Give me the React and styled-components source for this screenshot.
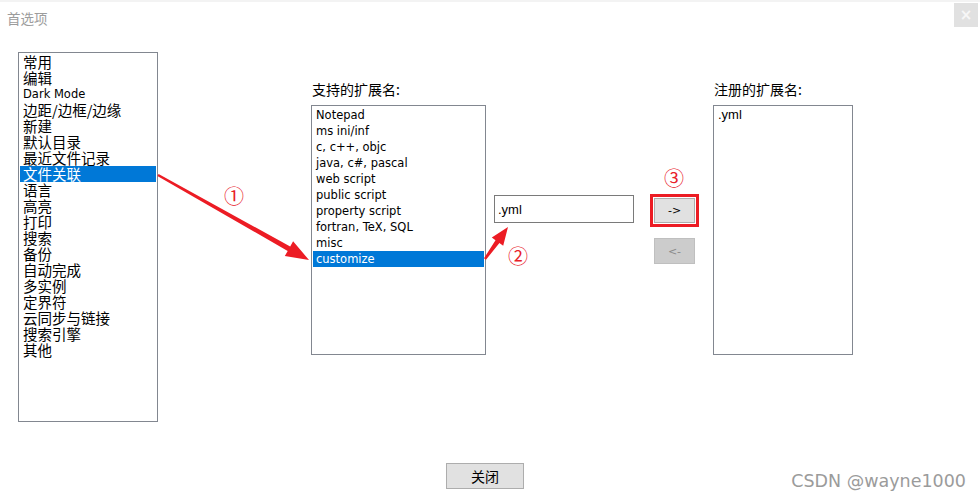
import React from "react"
import styled, { createGlobalStyle } from "styled-components"

const GlobalStyle = createGlobalStyle`
  html, body {
    margin: 0;
    padding: 0;
    background: #fff;
  }
  * {
    box-sizing: border-box;
  }
`

const cjk = `"Noto Sans CJK SC", "Noto Sans", sans-serif`
const latin = `"DejaVu Sans", "Noto Sans CJK SC", sans-serif`
const arial = `"Liberation Sans", Arial, sans-serif`

const Page = styled.div`
  position: relative;
  width: 980px;
  height: 502px;
  overflow: hidden;
  background: #fff;
  border-top: 2px solid #f3f3f3;
  font-family: ${cjk};
  color: #000;
`

const TitleBar = styled.div`
  height: 33px;
  display: flex;
  justify-content: space-between;
  align-items: center;
  padding: 0 2px 0 7px;
`

const Title = styled.div`
  font-size: 13.5px;
  color: #9c9c9c;
  margin-top: -1px;
`

const CloseX = styled.div`
  align-self: flex-start;
  margin-top: 1px;
  width: 24px;
  height: 24px;
  background: #e1e1e1;
  color: #f7f7f7;
  font-family: ${latin};
  font-size: 15px;
  font-weight: bold;
  display: flex;
  align-items: center;
  justify-content: center;
`

const Body = styled.div`
  display: flex;
  align-items: flex-start;
  margin-top: 17px;
  padding-left: 18px;
`

const Column = styled.div`
  display: flex;
  flex-direction: column;
  margin-left: ${p => p.$left}px;
  margin-top: ${p => p.$top || 0}px;
`

const Label = styled.div`
  font-size: 14px;
  line-height: 16px;
  height: 16px;
  padding-left: 1px;
  margin-bottom: 8px;
`

const ListBox = styled.div`
  width: ${p => p.$w}px;
  height: ${p => p.$h}px;
  border: 1px solid #828790;
  padding: 1px;
  background: #fff;
  overflow: hidden;
`

const fontFor = kind => (kind === "latin" ? latin : kind === "arial" ? arial : cjk)
const sizeFor = kind => (kind === "latin" ? "11.5px" : kind === "arial" ? "13px" : "14.5px")

const Item = styled.div`
  height: 16px;
  line-height: 16px;
  padding-left: 3px;
  white-space: nowrap;
  font-family: ${p => fontFor(p.$kind)};
  font-size: ${p => sizeFor(p.$kind)};
  background: ${p => (p.$selected ? "#0078d7" : "transparent")};
  color: ${p => (p.$selected ? "#fff" : "#000")};
`

const Field = styled.div`
  width: 140px;
  height: 28px;
  border: 1px solid #7a7a7a;
  padding-left: 3px;
  display: flex;
  align-items: center;
  font-family: ${arial};
  font-size: 13px;
`

const Button = styled.div`
  width: ${p => p.$w}px;
  height: ${p => p.$h}px;
  margin-top: ${p => p.$gap || 0}px;
  background: ${p => (p.$disabled ? "#cccccc" : "#e1e1e1")};
  border: 1px solid ${p => (p.$disabled ? "#bfbfbf" : "#adadad")};
  color: ${p => (p.$disabled ? "#8a8a8a" : "#000")};
  font-family: ${p => (p.$cjk ? cjk : latin)};
  font-size: ${p => (p.$cjk ? "14px" : "11px")};
  display: flex;
  align-items: center;
  justify-content: center;
  outline: ${p => (p.$marked ? "3px solid #ec1c24" : "none")};
  outline-offset: 1px;
`

const Footer = styled.div`
  margin-top: 41px;
  padding-left: 446px;
`

const Watermark = styled.div`
  position: absolute;
  right: 14px;
  bottom: 11px;
  font-family: "DejaVu Sans", sans-serif;
  font-size: 17.5px;
  color: #9b9b9b;
`

const Badge = styled.div`
  position: absolute;
  left: ${p => p.$x - 10}px;
  top: ${p => p.$y - 13}px;
  width: 20px;
  text-align: center;
  font-family: ${cjk};
  font-size: 20px;
  line-height: 24px;
  color: #e8202a;
`

const Overlay = styled.svg`
  position: absolute;
  left: 0;
  top: -2px;
  pointer-events: none;
`

const categories = [
  "常用", "编辑", "Dark Mode", "边距/边框/边缘", "新建", "默认目录", "最近文件记录",
  "文件关联", "语言", "高亮", "打印", "搜索", "备份", "自动完成", "多实例", "定界符",
  "云同步与链接", "搜索引擎", "其他",
]

const extensions = [
  "Notepad", "ms ini/inf", "c, c++, objc", "java, c#, pascal", "web script",
  "public script", "property script", "fortran, TeX, SQL", "misc", "customize",
]

const isLatin = s => /^[\x00-\x7f]+$/.test(s)

// tapered red arrow from (x1,y1) to tip (x2,y2)
function arrowPoints(x1, y1, x2, y2, head, half, w0, w1) {
  const dx = x2 - x1
  const dy = y2 - y1
  const len = Math.hypot(dx, dy)
  const ux = dx / len
  const uy = dy / len
  const px = -uy
  const py = ux
  const bx = x2 - ux * head
  const by = y2 - uy * head
  const pts = [
    [x1 + px * w0, y1 + py * w0],
    [bx + px * w1, by + py * w1],
    [bx + px * half, by + py * half],
    [x2, y2],
    [bx - px * half, by - py * half],
    [bx - px * w1, by - py * w1],
    [x1 - px * w0, y1 - py * w0],
  ]
  return pts.map(p => p.map(v => v.toFixed(1)).join(",")).join(" ")
}

export default function App() {
  return (
    <Page>
      <GlobalStyle />
      <TitleBar>
        <Title>首选项</Title>
        <CloseX>×</CloseX>
      </TitleBar>

      <Body>
        <ListBox $w={140} $h={370}>
          {categories.map(c => (
            <Item key={c} $kind={isLatin(c) ? "latin" : "cjk"} $selected={c === "文件关联"}>{c}</Item>
          ))}
        </ListBox>

        <Column $left={153} $top={29}>
          <Label>支持的扩展名:</Label>
          <ListBox $w={175} $h={250}>
            {extensions.map(e => (
              <Item key={e} $kind="latin" $selected={e === "customize"}>{e}</Item>
            ))}
          </ListBox>
        </Column>

        <Column $left={8} $top={143}>
          <Field>.yml</Field>
        </Column>

        <Column $left={20} $top={146}>
          <Button $w={41} $h={25} $marked>-&gt;</Button>
          <Button $w={41} $h={26} $gap={15} $disabled>&lt;-</Button>
        </Column>

        <Column $left={18} $top={29}>
          <Label>注册的扩展名:</Label>
          <ListBox $w={140} $h={250}>
            <Item $kind="arial">.yml</Item>
          </ListBox>
        </Column>
      </Body>

      <Footer>
        <Button $w={78} $h={26} $cjk>关闭</Button>
      </Footer>

      <Watermark>CSDN @wayne1000</Watermark>

      <Overlay width="980" height="502" viewBox="0 0 980 502">
        <polygon fill="#ec1c24" points={arrowPoints(158, 175, 309, 260, 23, 8.5, 1.2, 2.6)} />
        <polygon fill="#ec1c24" points={arrowPoints(485, 259, 508, 227, 18, 7, 1.2, 2.4)} />
      </Overlay>
      <Badge $x={234} $y={195}>①</Badge>
      <Badge $x={518} $y={255}>②</Badge>
      <Badge $x={674} $y={177}>③</Badge>
    </Page>
  )
}
